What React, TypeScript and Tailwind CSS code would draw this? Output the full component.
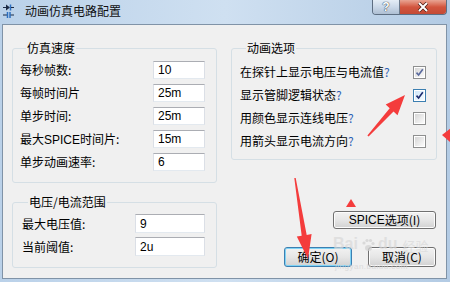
import React from "react";

const FONT = "font-['Noto_Sans_CJK_SC','Microsoft_YaHei',sans-serif]";
const LAT = "font-['Liberation_Sans','Arial',sans-serif]";

function arrowPts(tx: number, ty: number, hx: number, hy: number, tailW: number, shaftW: number, headW: number, headL: number) {
  const dx = hx - tx, dy = hy - ty;
  const L = Math.hypot(dx, dy);
  const ux = dx / L, uy = dy / L;
  const nx = -uy, ny = ux;
  const bx = hx - ux * headL, by = hy - uy * headL;
  const p = (x: number, y: number) => `${x.toFixed(1)},${y.toFixed(1)}`;
  return [
    p(tx + nx * tailW / 2, ty + ny * tailW / 2),
    p(bx + nx * shaftW / 2, by + ny * shaftW / 2),
    p(bx + nx * headW / 2, by + ny * headW / 2),
    p(hx, hy),
    p(bx - nx * headW / 2, by - ny * headW / 2),
    p(bx - nx * shaftW / 2, by - ny * shaftW / 2),
    p(tx - nx * tailW / 2, ty - ny * tailW / 2),
  ].join(" ");
}

function Input({ value, w }: { value: string; w: number }) {
  return (
    <div
      className={`h-full bg-white border border-[#abadb3] border-b-[#e3e9ef] border-l-[#dbdfe6] border-r-[#dbdfe6] flex items-center pl-[4px] text-[12px] text-black ${LAT}`}
      style={{ width: w }}
    >
      {value}
    </div>
  );
}

function Check({ variant }: { variant: "dim" | "focus" | "off" }) {
  const border = variant === "focus" ? "border-[#3c7fb1]" : "border-[#8e8f8f]";
  const bg =
    variant === "focus"
      ? "bg-gradient-to-br from-[#cfe7fa] to-[#f4fbff]"
      : "bg-gradient-to-br from-[#d6d6d6] to-[#fbfbfb]";
  return (
    <div className={`w-[13px] h-[13px] border ${border} bg-white p-[1px]`}>
      <div className={`w-full h-full ${bg} relative`}>
        {variant !== "off" && (
          <svg viewBox="0 0 9 9" className="absolute inset-0 w-[9px] h-[9px]">
            <path
              d="M1.5 4.6 L3.6 7 L7.8 1.2"
              fill="none"
              stroke={variant === "focus" ? "#1b2b6e" : "#5a6a9e"}
              strokeWidth="1.6"
            />
          </svg>
        )}
      </div>
    </div>
  );
}

function Q() {
  return <span className="text-[#2f62b5]">?</span>;
}

function Btn({ children, w, h, def }: { children: React.ReactNode; w: number; h: number; def?: boolean }) {
  return (
    <div
      className={`rounded-[3px] border ${def ? "border-[#3c7fb1] shadow-[inset_0_0_0_1px_#7fd3f5]" : "border-[#707070] shadow-[inset_0_0_0_1px_#fcfcfc]"} bg-gradient-to-b from-[#f2f2f2] via-[#e6e6e6] to-[#d2d2d2] flex items-center justify-center text-[12px] text-black ${FONT}`}
      style={{ width: w, height: h }}
    >
      {children}
    </div>
  );
}

export default function App() {
  const leftRows: [React.ReactNode, string][] = [
    ["每秒帧数:", "10"],
    ["每帧时间片", "25m"],
    ["单步时间:", "25m"],
    [<>最大<span className={LAT}>SPICE</span>时间片:</>, "15m"],
    ["单步动画速率:", "6"],
  ];
  return (
    <div className={`relative w-[450px] h-[282px] overflow-hidden bg-gradient-to-r from-[#bad1e9] via-[#cfe0f1] to-[#b3cbe4] ${FONT}`}>
      {/* title bar */}
      <div className="flex h-[24px] items-start">
        <div className="flex items-center h-[21px] pl-[3px] gap-[11px]">
          <svg width="11" height="14" viewBox="0 0 11 14">
            <path d="M0 3.5 H3" stroke="#1b2a44" strokeWidth="1" />
            <path d="M3 0.5 L3 6.5 L7 3.5 Z" fill="#1b2a44" />
            <path d="M7.5 0.5 V6.5" stroke="#2d6fc0" strokeWidth="1.5" />
            <path d="M8 3.5 H11" stroke="#1b2a44" strokeWidth="1" />
            <path d="M0 11 H4 M7 11 H11" stroke="#1b2a44" strokeWidth="1" />
            <path d="M4.5 8 V14 M7 8 V14" stroke="#2d6fc0" strokeWidth="1.5" />
          </svg>
          <span className="text-[12px] leading-none text-[#101010]">动画仿真电路配置</span>
        </div>
        <div className="ml-auto mr-[3px] flex h-[15px] rounded-b-[4px] border border-t-0 border-[#5d6e82] overflow-hidden">
          <div className="w-[27px] h-full bg-gradient-to-b from-[#e4edf6] via-[#cad8e8] to-[#aebfd3] flex items-center justify-center border-r border-[#6a7a8c]">
            <span className={`text-[12px] font-bold leading-none text-white [text-shadow:0_0_1px_#243040,0_0_1px_#243040] ${LAT}`}>?</span>
          </div>
          <div className="w-[46px] h-full bg-gradient-to-b from-[#e8a493] via-[#d2553e] to-[#c44a35] flex items-center justify-center">
            <svg width="12" height="10" viewBox="0 0 12 10">
              <path d="M2 1 L10 9 M10 1 L2 9" stroke="#4a1a12" strokeWidth="3.4" />
              <path d="M2 1 L10 9 M10 1 L2 9" stroke="#ffffff" strokeWidth="2" />
            </svg>
          </div>
        </div>
      </div>

      {/* client area */}
      <div className="ml-[2px] w-[445px] h-[255px] border border-[#8093a7] bg-[#f0f0f0] flex gap-[14px] pl-[9px] pr-[9px] pt-[15px] text-[12px] text-black">
        {/* left column */}
        <div className="w-[205px] flex flex-col gap-[11px]">
          <fieldset className="border border-[#d5dfe5] rounded-[3px] pl-[7px] pr-[11px] pt-[5px] pb-[11px] flex flex-col gap-[5px]">
            <legend className="ml-[6px] px-[1px] leading-[16px]">仿真速度</legend>
            {leftRows.map(([l, v], i) => (
              <div key={i} className="flex items-center justify-between h-[18px]">
                <span className="leading-none">{l}</span>
                <Input value={v} w={52} />
              </div>
            ))}
          </fieldset>
          <fieldset className="border border-[#d5dfe5] rounded-[3px] pl-[9px] pr-[11px] pt-[4px] pb-[11px] flex flex-col gap-[4px]">
            <legend className="ml-[6px] px-[1px] leading-[16px]">电压/电流范围</legend>
            <div className="flex items-center justify-between h-[19px]">
              <span className="leading-none">最大电压值:</span>
              <Input value="9" w={70} />
            </div>
            <div className="flex items-center justify-between h-[19px]">
              <span className="leading-none">当前阈值:</span>
              <Input value="2u" w={70} />
            </div>
          </fieldset>
        </div>

        {/* right column */}
        <div className="w-[206px] flex flex-col">
          <fieldset className="border border-[#d5dfe5] rounded-[3px] pl-[8px] pr-[10px] pt-[8px] pb-[10px] flex flex-col gap-[7px]">
            <legend className="ml-[6px] px-[1px] leading-[16px]">动画选项</legend>
            <div className="flex items-center justify-between h-[16px]">
              <span className="leading-none">在探针上显示电压与电流值<Q /></span>
              <Check variant="dim" />
            </div>
            <div className="flex items-center justify-between h-[16px]">
              <span className="leading-none">显示管脚逻辑状态<Q /></span>
              <Check variant="focus" />
            </div>
            <div className="flex items-center justify-between h-[16px]">
              <span className="leading-none">用颜色显示连线电压<Q /></span>
              <Check variant="off" />
            </div>
            <div className="flex items-center justify-between h-[16px]">
              <span className="leading-none">用箭头显示电流方向<Q /></span>
              <Check variant="off" />
            </div>
          </fieldset>
          <div className="mt-[51px] self-end mr-[1px]">
            <Btn w={103} h={18}>
              <span className={LAT}>SPICE</span>选项(I)
            </Btn>
          </div>
          <div className="mt-[18px] flex justify-end gap-[16px] mr-[1px]">
            <Btn w={68} h={20} def>确定(O)</Btn>
            <Btn w={68} h={20}>取消(C)</Btn>
          </div>
        </div>
      </div>

      {/* watermark */}
      <div className="absolute left-[333px] top-[236px] flex items-end gap-[3px] text-[#d9d9d9] opacity-70 pointer-events-none">
        <span className={`text-[16px] font-bold leading-none ${LAT}`}>Bai</span>
        <svg width="14" height="14" viewBox="0 0 14 14">
          <circle cx="3" cy="5" r="1.6" fill="#d0d0d0" />
          <circle cx="6" cy="2.5" r="1.6" fill="#d0d0d0" />
          <circle cx="9.5" cy="2.5" r="1.6" fill="#d0d0d0" />
          <circle cx="12" cy="5.5" r="1.6" fill="#d0d0d0" />
          <ellipse cx="7.5" cy="10" rx="3.5" ry="3" fill="#d0d0d0" />
        </svg>
        <span className={`text-[16px] font-bold leading-none ${LAT}`}>du</span>
        <span className="text-[13px] leading-none ml-[2px]">经验</span>
      </div>
      <div className={`absolute left-[335px] top-[263px] text-[8px] leading-none text-[#d6d6d6] opacity-80 tracking-[0.5px] pointer-events-none ${LAT}`}>
        jingyan.baidu.com
      </div>

      {/* annotation arrows */}
      <svg className="absolute inset-0 pointer-events-none" width="450" height="282" viewBox="0 0 450 282">
        <polygon points={arrowPts(368, 136, 405, 95, 1.5, 5, 16, 20)} fill="#f43c3c" />
        <polygon points={arrowPts(295, 178, 308, 259, 1.5, 5, 15, 24)} fill="#f43c3c" />
        <polygon points="346,207 356,207 351,199" fill="#f43c3c" />
        <polygon points="442,135 451,128 451,143" fill="#f43c3c" />
      </svg>
    </div>
  );
}
